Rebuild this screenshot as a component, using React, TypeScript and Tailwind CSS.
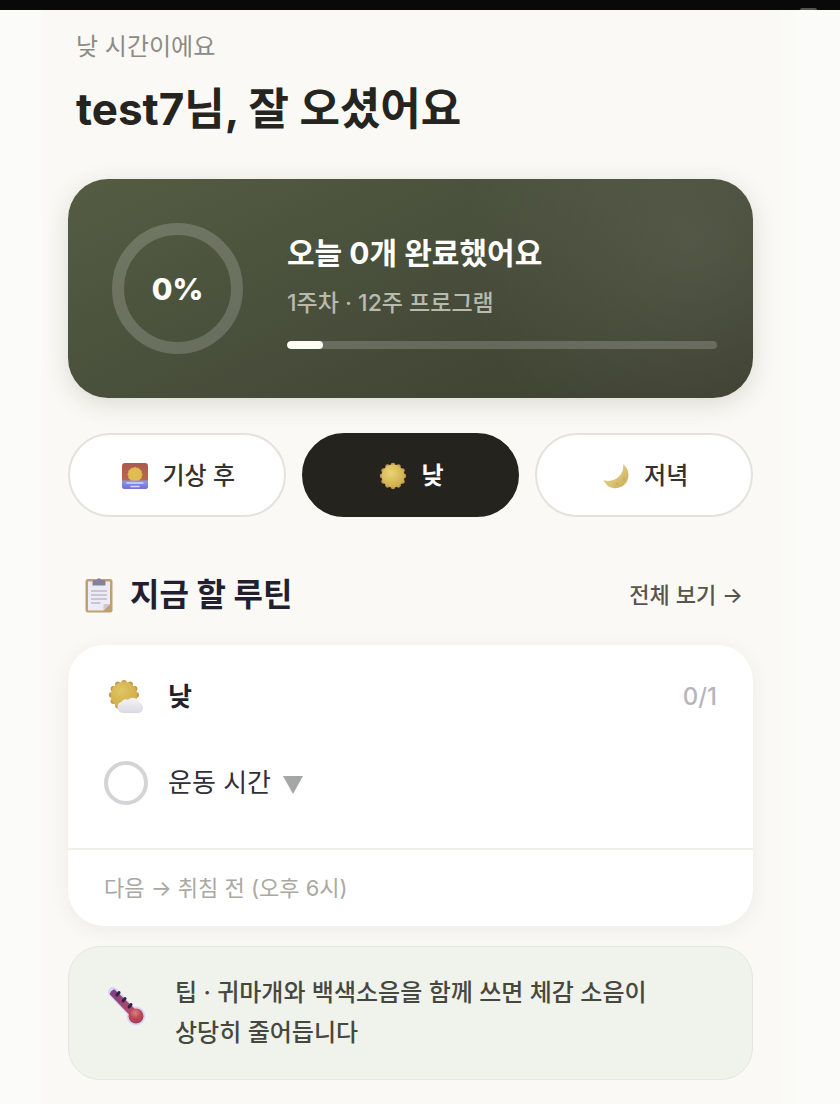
import { useState } from "react";

const DAYTIME_TABS = [
  { id: "morning", label: "기상 후", Icon: SunriseIcon },
  { id: "day", label: "낮", Icon: SunIcon },
  { id: "evening", label: "저녁", Icon: MoonIcon },
];

// Scalloped rim shared by the sun icons
function sunRim(cx: number, cy: number, radius: number, petal: number) {
  return Array.from({ length: 12 }, (_, i) => {
    const angle = (i * Math.PI) / 6;
    return (
      <circle
        key={i}
        cx={cx + radius * Math.cos(angle)}
        cy={cy + radius * Math.sin(angle)}
        r={petal}
        fill="#c39a4b"
      />
    );
  });
}

function SunriseIcon() {
  return (
    <svg viewBox="0 0 28 28" className="size-7" aria-hidden="true">
      <defs>
        <linearGradient id="sunrise-sky" x1="0" y1="0" x2="0" y2="1">
          <stop offset="0" stopColor="#a9594f" />
          <stop offset="1" stopColor="#c0704f" />
        </linearGradient>
        <linearGradient id="sunrise-sea" x1="0" y1="0" x2="0" y2="1">
          <stop offset="0" stopColor="#8f98ee" />
          <stop offset="1" stopColor="#6f68d8" />
        </linearGradient>
        <clipPath id="sunrise-frame">
          <rect x="1" y="1" width="26" height="26" rx="3" />
        </clipPath>
      </defs>
      <g clipPath="url(#sunrise-frame)">
        <rect width="28" height="28" fill="url(#sunrise-sky)" />
        {sunRim(14, 12.5, 6.2, 1.6)}
        <circle cx="14" cy="12.5" r="6.9" fill="#dfbd52" />
        <rect y="18.5" width="28" height="9.5" fill="url(#sunrise-sea)" />
        <path d="M6 21h16M10 24.5h8" stroke="#d5dafc" strokeWidth="1.6" strokeLinecap="round" />
      </g>
    </svg>
  );
}

function SunIcon() {
  return (
    <svg viewBox="0 0 28 28" className="size-7" aria-hidden="true">
      <defs>
        <radialGradient id="sun-face" cx="0.4" cy="0.35" r="0.7">
          <stop offset="0" stopColor="#ead477" />
          <stop offset="1" stopColor="#ceaa48" />
        </radialGradient>
      </defs>
      {sunRim(14, 14, 10.8, 2.4)}
      <circle cx="14" cy="14" r="11.4" fill="url(#sun-face)" />
    </svg>
  );
}

function MoonIcon() {
  return (
    <svg viewBox="0 0 28 28" className="size-7" aria-hidden="true">
      <defs>
        <linearGradient id="moon-face" x1="0" y1="0" x2="1" y2="1">
          <stop offset="0" stopColor="#efdf9d" />
          <stop offset="1" stopColor="#c9ac55" />
        </linearGradient>
      </defs>
      <path
        d="M21 2C25.500 5.500 27.500 11 26 16.500C24 23.500 17.500 27 11 26C6.500 25.200 3 22 1.500 18C7 20 13 18.500 17 14.500C20.500 11 21.800 6.500 21 2Z"
        fill="url(#moon-face)"
      />
      <circle cx="22" cy="17" r="1.400" fill="#bfa252" opacity="0.500" />
      <circle cx="15" cy="22" r="1.200" fill="#bfa252" opacity="0.500" />
    </svg>
  );
}

function ClipboardIcon() {
  return (
    <svg viewBox="0 0 30 36" className="h-9 w-[30px]" aria-hidden="true">
      <rect x="1.500" y="2" width="27" height="33.500" rx="2.500" fill="#c0a06e" />
      <path d="M4 4.500h22v22.500l-6.500 6.500H4z" fill="#edebf5" />
      <path d="M26 27h-5a1.500 1.500 0 0 0-1.500 1.500v5z" fill="#cbc8d6" />
      <path
        d="M10.500 3h2.200a2.400 2.400 0 0 1 4.600 0h2.200a2 2 0 0 1 2 2v3.500h-13V5a2 2 0 0 1 2-2z"
        fill="#858293"
      />
      <path d="M7 14h16M7 18h16M7 22h16M7 26h9.500" stroke="#a7a4b5" strokeWidth="1.200" />
    </svg>
  );
}

function SunCloudIcon() {
  return (
    <svg viewBox="0 0 36 36" className="size-9" aria-hidden="true">
      <defs>
        <radialGradient id="sun-cloud-face" cx="0.4" cy="0.35" r="0.7">
          <stop offset="0" stopColor="#dfc665" />
          <stop offset="1" stopColor="#ceab45" />
        </radialGradient>
        <linearGradient id="cloud" x1="0" y1="0" x2="0" y2="1">
          <stop offset="0" stopColor="#f6f5f8" />
          <stop offset="1" stopColor="#dad7e3" />
        </linearGradient>
      </defs>
      {sunRim(16, 16, 12.400, 2.700)}
      <circle cx="16" cy="16" r="13.200" fill="url(#sun-cloud-face)" />
      <path
        d="M15 34a5.800 5.800 0 0 1-1.500-11.300a5.500 5.500 0 0 1 6.500-1.900a7 7 0 0 1 11.500 2.800a5.400 5.400 0 0 1-1 10.400z"
        fill="url(#cloud)"
      />
    </svg>
  );
}

function ThermometerIcon() {
  return (
    <svg viewBox="0 0 42 42" className="size-[42px]" aria-hidden="true">
      <defs>
        <linearGradient id="mercury" x1="0" y1="0" x2="1" y2="1">
          <stop offset="0" stopColor="#7c3f83" />
          <stop offset="1" stopColor="#c04d62" />
        </linearGradient>
        <radialGradient id="bulb" cx="0.45" cy="0.3" r="0.7">
          <stop offset="0" stopColor="#dc8382" />
          <stop offset="0.5" stopColor="#bd4a56" />
          <stop offset="1" stopColor="#a73c56" />
        </radialGradient>
      </defs>
      <g fill="#d9d5f5" stroke="#d9d5f5">
        <path d="M8 7L31 31" strokeWidth="10" strokeLinecap="round" />
        <circle cx="31" cy="31" r="9" />
      </g>
      <path
        d="M7 6.500l2-1.500L30 25L25 29.500L5.500 9z"
        fill="url(#mercury)"
        stroke="url(#mercury)"
        strokeWidth="1.500"
        strokeLinejoin="round"
      />
      <path
        d="M14 7.500l-2 2.500M20 13.500l-2 2.500M26 19.500l-2 2.500"
        stroke="#2f2440"
        strokeWidth="3"
        strokeLinecap="round"
      />
      <circle cx="31" cy="31" r="7.500" fill="url(#bulb)" />
    </svg>
  );
}

export default function App() {
  const [activeTab, setActiveTab] = useState("day");
  const progress = 0;

  return (
    <div className="min-h-screen bg-[#fbfbf9] font-['Inter','Noto_Sans_CJK_KR',sans-serif] text-[#25241f]">
      <div className="flex h-[10px] items-end justify-end bg-[#090909] pr-[23px]">
        <div className="h-[2px] w-[17px] rounded-t-sm bg-[#555]" />
      </div>

      <main className="mr-[44px] ml-[42px] border-r-[17px] border-[#fafaf7] bg-[#faf9f5] px-[26px] pt-[21px] pb-7">
        <header className="px-2">
          <p className="text-[24px] leading-8 text-[#8d8b83]">낮 시간이에요</p>
          <h1 className="mt-4 text-[44px] leading-[60px] font-bold">test7님, 잘 오셨어요</h1>
        </header>

        {/* Today's progress */}
        <section className="mt-10 flex items-center gap-11 rounded-[40px] bg-[radial-gradient(circle_at_91%_28%,rgba(255,255,255,0.08),transparent_36%),linear-gradient(155deg,#545d43_0%,#484f3b_45%,#3d3f2f_100%)] py-11 pr-9 pl-11 shadow-[0_6px_24px_rgba(60,64,45,0.16)]">
          <div className="relative flex size-[131px] shrink-0 items-center justify-center">
            <svg viewBox="0 0 131 131" className="absolute inset-0 -rotate-90" aria-hidden="true">
              <circle cx="65.5" cy="65.5" r="59.5" fill="none" stroke="white" strokeOpacity="0.18" strokeWidth="12" />
            </svg>
            <span className="text-[30px] leading-9 font-extrabold text-white">{progress}%</span>
          </div>
          <div className="min-w-0 flex-1 pt-1">
            <h2 className="text-[30px] leading-10 font-bold text-white">오늘 0개 완료했어요</h2>
            <p className="mt-[14px] text-[23px] leading-8 font-medium text-[#b8baae]">1주차 · 12주 프로그램</p>
            <div className="mt-[22px] h-2 overflow-hidden rounded-full bg-white/18">
              <div className="h-full w-9 rounded-full bg-[#fdfdf8]" />
            </div>
          </div>
        </section>

        {/* Time of day */}
        <div className="mt-[35px] grid grid-cols-3 gap-4">
          {DAYTIME_TABS.map(({ id, label, Icon }) => (
            <button
              key={id}
              type="button"
              aria-pressed={activeTab === id}
              onClick={() => setActiveTab(id)}
              className={`flex h-[84px] items-center justify-center gap-[14px] rounded-full border-2 pt-[2px] pl-[2px] text-[24px] leading-8 ${
                activeTab === id
                  ? "border-[#25231e] bg-[#25231e] font-bold text-white"
                  : "border-[#e3e2dc] bg-white font-medium text-[#33322e]"
              }`}
            >
              <Icon />
              {label}
            </button>
          ))}
        </div>

        {/* Routines for now */}
        <div className="mt-[58px] flex items-center justify-between pr-[10px] pl-4">
          <h2 className="flex items-center gap-4 text-[32px] leading-10 font-bold text-[#211f30]">
            <ClipboardIcon />
            지금 할 루틴
          </h2>
          <a href="#routines" className="text-[22px] leading-8 font-medium text-[#56554e]">
            전체 보기 →
          </a>
        </div>

        <section className="mt-[30px] rounded-[36px] bg-white shadow-[0_4px_20px_rgba(60,60,40,0.07)]">
          <div className="px-9 pt-8 pb-[43px]">
            <div className="flex items-center">
              <div className="flex w-16 items-center pl-1">
                <SunCloudIcon />
              </div>
              <h3 className="text-[26px] leading-10 font-bold text-[#211f30]">낮</h3>
              <span className="ml-auto text-[24px] leading-8 font-medium text-[#b6b5bc]">0/1</span>
            </div>
            <div className="mt-11 flex items-center">
              <input
                id="exercise"
                type="checkbox"
                className="mr-5 size-11 appearance-none rounded-full border-4 border-[#d3d3d8] bg-white checked:bg-[#4a523c]"
              />
              <label htmlFor="exercise" className="text-[26px] leading-10 text-[#302f38]">
                운동 시간
              </label>
              <button type="button" aria-label="운동 시간 펼치기" className="mt-1 ml-3">
                <svg viewBox="0 0 20 18" className="h-[18px] w-5" aria-hidden="true">
                  <path d="M0 0h20l-10 18z" fill="#a3a7a6" />
                </svg>
              </button>
            </div>
          </div>
          <p className="border-t-2 border-[#f0f0ed] px-9 py-[22px] text-[22px] leading-8 text-[#a9a8a2]">
            다음 → 취침 전 (오후 6시)
          </p>
        </section>

        {/* Tip */}
        <aside className="mt-5 flex gap-7 rounded-[32px] border border-[#e3e7de] bg-[#f0f2ec] px-9 py-[26px]">
          <div className="flex h-[66px] shrink-0 items-center">
            <ThermometerIcon />
          </div>
          <p className="text-[24px] leading-10 font-medium break-keep text-[#46483d]">
            팁 · 귀마개와 백색소음을 함께 쓰면 체감 소음이 상당히 줄어듭니다
          </p>
        </aside>
      </main>
    </div>
  );
}
